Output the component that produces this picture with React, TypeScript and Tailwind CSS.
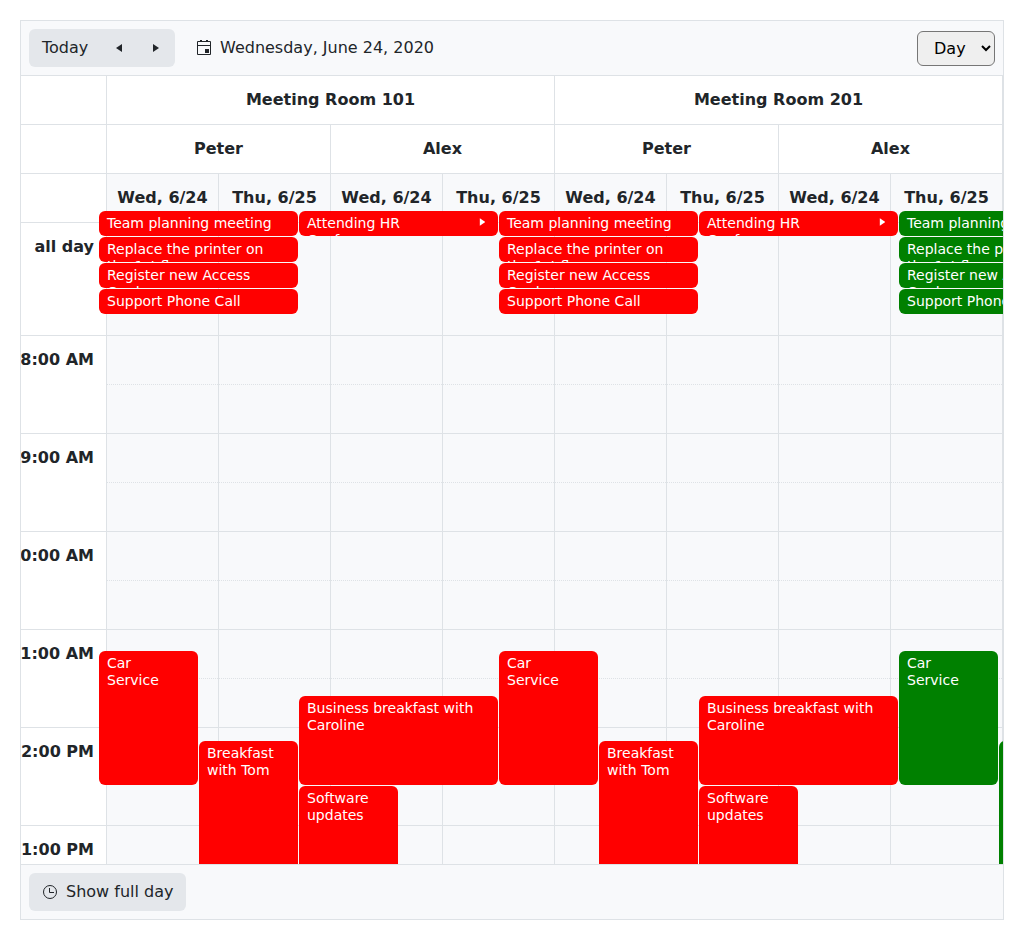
import React from 'react';

const rooms = ['Meeting Room 101', 'Meeting Room 201'];
const people = ['Peter', 'Alex', 'Peter', 'Alex'];
const days = ['Wed, 6/24', 'Thu, 6/25', 'Wed, 6/24', 'Thu, 6/25', 'Wed, 6/24', 'Thu, 6/25', 'Wed, 6/24', 'Thu, 6/25'];
const hours = ['8:00 AM', '9:00 AM', '10:00 AM', '11:00 AM', '12:00 PM', '1:00 PM'];

type CalendarEvent = {
  title: string;
  left: number;
  top: number;
  width: number;
  height: number;
  continues?: boolean;
};

const groupEvents: CalendarEvent[] = [
  { title: 'Team planning meeting', left: 0, top: 0, width: 199, height: 25 },
  { title: 'Replace the printer on the 1st floor', left: 0, top: 26, width: 199, height: 25 },
  { title: 'Register new Access Card', left: 0, top: 52, width: 199, height: 25 },
  { title: 'Support Phone Call', left: 0, top: 78, width: 199, height: 25 },
  { title: 'Attending HR Conference', left: 200, top: 0, width: 199, height: 25, continues: true },
  { title: 'Car Service', left: 0, top: 440, width: 99, height: 134 },
  { title: 'Breakfast with Tom', left: 100, top: 530, width: 99, height: 180 },
  { title: 'Business breakfast with Caroline', left: 200, top: 485, width: 199, height: 89 },
  { title: 'Software updates', left: 200, top: 575, width: 99, height: 134 },
];

const groups = [
  { offset: 78, color: 'bg-[#ff0000]' },
  { offset: 478, color: 'bg-[#ff0000]' },
  { offset: 878, color: 'bg-[#008000]' },
];

function EventBox({ event, offset, color }: { event: CalendarEvent; offset: number; color: string }) {
  return (
    <div
      className={`absolute flex overflow-hidden rounded-md pt-1 pr-3 pl-2 text-sm leading-[17px] text-white ${color}`}
      style={{ left: offset + event.left, top: 135 + event.top, width: event.width, height: event.height }}
    >
      <span className={event.continues ? 'w-[150px] shrink-0' : 'mr-1 min-w-0 flex-1'}>{event.title}</span>
      {event.continues && (
        <svg className="mt-[3px] ml-[22px] h-2 w-1.5 shrink-0" viewBox="0 0 6 8" fill="currentColor">
          <path d="M0.8 0.3 6.2 4 0.8 7.7Z" />
        </svg>
      )}
    </div>
  );
}

function HeaderRow({ labels, tinted }: { labels: string[]; tinted?: boolean }) {
  return (
    <div className="flex h-[49px] shrink-0">
      <div className="w-[86px] shrink-0 border-r border-b border-[#dee2e6]" />
      {labels.map((label, i) => (
        <div
          key={i}
          className={`flex flex-1 items-center justify-center border-r border-b border-[#dee2e6] font-bold whitespace-nowrap ${tinted ? 'bg-[#f8f9fb]' : ''}`}
        >
          {label}
        </div>
      ))}
    </div>
  );
}

function TimeLabel({ text }: { text: string }) {
  return (
    <div className="flex w-[86px] shrink-0 justify-end border-r border-b border-[#dee2e6] pt-3 pr-3 font-bold whitespace-nowrap">
      {text}
    </div>
  );
}

export default function App() {
  return (
    <div className="h-[940px] w-[1024px] bg-white p-5 font-['DejaVu_Sans',sans-serif] text-base text-[#212529]">
      <div className="flex h-[900px] flex-col overflow-hidden border border-[#dee2e6]">
        <header className="flex h-[55px] shrink-0 items-center border-b border-[#dee2e6] bg-[#f8f9fb] px-2">
          <div className="flex h-[38px] w-[146px] items-center rounded-md bg-[#e4e7eb]">
            <button className="pl-[13px]">Today</button>
            <button className="ml-7" aria-label="Previous">
              <svg className="h-2 w-1.5" viewBox="0 0 6 8" fill="currentColor">
                <path d="M6 0V8L0 4Z" />
              </svg>
            </button>
            <button className="ml-[31px]" aria-label="Next">
              <svg className="h-2 w-1.5" viewBox="0 0 6 8" fill="currentColor">
                <path d="M0 0V8L6 4Z" />
              </svg>
            </button>
          </div>
          <svg className="ml-[22px] h-4 w-[14px]" viewBox="0 0 14 16" fill="none" stroke="currentColor">
            <path d="M0.5 1.5h13v13h-13zM0.5 5.5h13" />
            <path d="M3 0h2v2H3zM9 0h2v2H9zM8 9h4v4H8z" fill="currentColor" stroke="none" />
          </svg>
          <span className="ml-[9px]">Wednesday, June 24, 2020</span>
          <select className="ml-auto h-[35px] w-[78px] rounded-md border border-[#767676] bg-[#efefef] pl-3 text-black">
            <option>Day</option>
          </select>
        </header>

        <main className="relative flex min-h-0 flex-1 flex-col overflow-hidden">
          <HeaderRow labels={rooms} />
          <HeaderRow labels={people} />
          <HeaderRow labels={days} tinted />
          <div className="flex h-[113px] shrink-0">
            <TimeLabel text="all day" />
            {days.map((_, i) => (
              <div key={i} className="flex-1 border-r border-b border-[#dee2e6] bg-[#f8f9fb]" />
            ))}
          </div>
          {hours.map((hour) => (
            <div key={hour} className="flex h-[98px] shrink-0">
              <TimeLabel text={hour} />
              {days.map((_, i) => (
                <div key={i} className="flex flex-1 flex-col border-r border-b border-[#dee2e6] bg-[#f8f9fb]">
                  <div className="h-[49px] border-b border-dotted border-[#dee2e6]" />
                </div>
              ))}
            </div>
          ))}
          {groups.map((group) =>
            groupEvents.map((event) => (
              <EventBox key={`${group.offset}-${event.title}`} event={event} offset={group.offset} color={group.color} />
            )),
          )}
        </main>

        <footer className="flex h-[55px] shrink-0 items-center border-t border-[#dee2e6] bg-[#f8f9fb] px-2">
          <button className="flex h-[38px] w-[157px] items-center rounded-md bg-[#e4e7eb] pl-[14px]">
            <svg className="h-[14px] w-[14px]" viewBox="0 0 14 14" fill="none" stroke="currentColor">
              <circle cx="7" cy="7" r="6.5" />
              <path d="M6.5 3v4.5H11" />
            </svg>
            <span className="ml-[9px]">Show full day</span>
          </button>
        </footer>
      </div>
    </div>
  );
}
